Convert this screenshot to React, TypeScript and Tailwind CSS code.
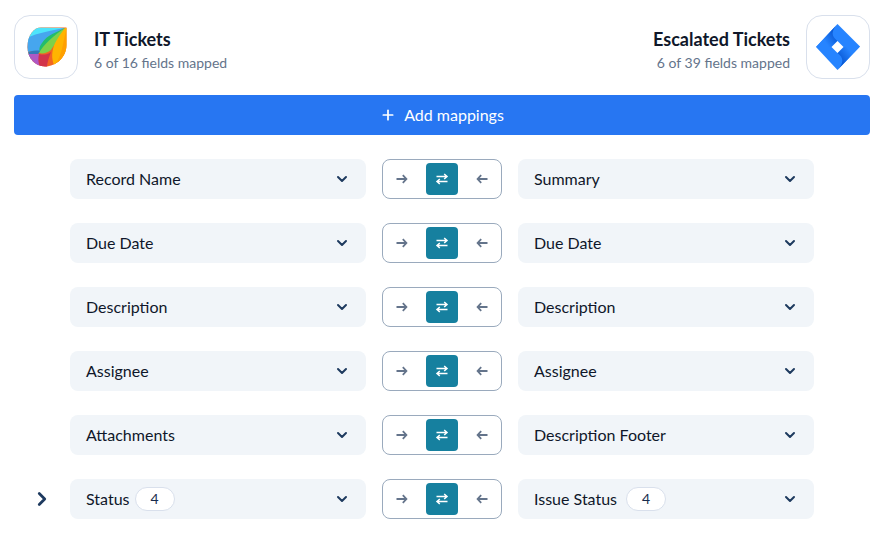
import { ChevronDown, ChevronRight, Plus } from "lucide-react";

interface Mapping {
  left: string;
  right: string;
  count?: number;
}

const mappings: Mapping[] = [
  { left: "Record Name", right: "Summary" },
  { left: "Due Date", right: "Due Date" },
  { left: "Description", right: "Description" },
  { left: "Assignee", right: "Assignee" },
  { left: "Attachments", right: "Description Footer" },
  { left: "Status", right: "Issue Status", count: 4 },
];

function LeafLogo() {
  return (
    <svg width="40" height="40" viewBox="0 0 40 40">
      <defs>
        <clipPath id="leaf">
          <path d="M14 0.5 H39.5 V18 C39.5 30 29 39.5 18 39.5 C8 39.5 0.5 31 0.5 20 C0.5 8 7 0.5 14 0.5 Z" />
        </clipPath>
      </defs>
      <g clipPath="url(#leaf)">
        <rect width="40" height="40" fill="#f26522" />
        <path d="M38 1 L0 0 V16 C12 8 26 4 38 1 Z" fill="#4ee4fb" />
        <path d="M38 1 C26 3 10 6 0 11 V25 C6 24 12 24 14 24 C18 14 28 6 38 1 Z" fill="#46a6ee" />
        <path d="M14 24 C8 23 3 24 0 26 V34 L8 30 C10 28 12 26 14 24 Z" fill="#3379b8" />
        <path d="M13 27 C8 27 3 27 0 27 V40 H16 C12 36 12 31 13 27 Z" fill="#ae59c4" />
        <path d="M38 1 C30 5 20 8 15 16 C12 20 12 23 13 25 C20 18 30 10 38 1 Z" fill="#22bd6c" />
        <path d="M38 1 C34 10 27 18 24 23 C20 26 16 27 12 26 C16 18 27 8 38 1 Z" fill="#7ed14a" />
        <path d="M12 27 C16 28 20 28 24 25 C22 30 20 36 20 40 H13 C11 36 11 31 12 27 Z" fill="#d2344a" />
        <path d="M38 1 C33 8 28 14 26 22 C24 30 26 36 28 40 H40 V1 Z" fill="#ffb400" />
        <path d="M39 4 V20 C39 28 34 34 28 37 C35 30 36 14 39 4 Z" fill="#ffa000" />
      </g>
    </svg>
  );
}

function DiamondLogo() {
  return (
    <svg width="44" height="46" viewBox="0 0 44 46" className="shrink-0">
      <defs>
        <linearGradient id="jiraA" x1="0.85" y1="0.4" x2="0.4" y2="0.75">
          <stop offset="0" stopColor="#0a5ad6" />
          <stop offset="1" stopColor="#2684ff" />
        </linearGradient>
        <linearGradient id="jiraB" x1="0.15" y1="0.6" x2="0.6" y2="0.25">
          <stop offset="0" stopColor="#0a5ad6" />
          <stop offset="1" stopColor="#2684ff" />
        </linearGradient>
      </defs>
      <path d="M21.5 0 L44 22.5 L21.5 46 L0 23 Z" fill="#2684ff" />
      <path d="M21.5 0 C15 7 15 12 21.5 17 L15.5 23 L0 23 Z" fill="url(#jiraA)" />
      <path d="M21.5 46 C28 39 28 34 21.5 29 L27.5 23 L44 22.5 Z" fill="url(#jiraB)" />
      <path d="M21.5 17 L27.5 23 L21.5 29 L15.5 23 Z" fill="#ffffff" />
    </svg>
  );
}

function SwapIcon() {
  return (
    <svg width="14" height="14" viewBox="0 0 14 14" fill="none" stroke="#ffffff" strokeWidth="1.5">
      <path d="M1.5 4.5 H12 M9.2 2 L12 4.5 L9.2 7" />
      <path d="M12.5 9.5 H2 M4.8 7 L2 9.5 L4.8 12" />
    </svg>
  );
}

function ArrowGlyph({ flip }: { flip?: boolean }) {
  return (
    <svg
      width="12"
      height="10"
      viewBox="0 0 12 10"
      fill="none"
      stroke="#64748b"
      strokeWidth="1.8"
      className={flip ? "rotate-180" : ""}
    >
      <path d="M0.5 5 H10 M6.8 1.2 L10.4 5 L6.8 8.8" />
    </svg>
  );
}

function CountPill({ count }: { count: number }) {
  return (
    <span className="ml-[5px] flex h-6 w-10 items-center justify-center rounded-full border border-[#d9e0ec] bg-white text-sm text-[#172b4d]">
      {count}
    </span>
  );
}

function FieldSelect({ label, count, pillGap }: { label: string; count?: number; pillGap?: boolean }) {
  return (
    <div className="flex h-10 w-[296px] items-center justify-between rounded-lg bg-[#f1f5f9] pl-4 pr-4">
      <div className="flex items-center">
        <span className="text-base text-[#0f172a]">{label}</span>
        {count !== undefined && (
          <div className={pillGap ? "ml-[4px]" : ""}>
            <CountPill count={count} />
          </div>
        )}
      </div>
      <ChevronDown size={16} strokeWidth={3} className="text-[#1e3a5f]" />
    </div>
  );
}

function DirectionToggle() {
  return (
    <div className="mx-4 flex h-10 w-[120px] items-center justify-between rounded-lg border border-[#9aaabd] bg-white pl-[13px] pr-[13px]">
      <ArrowGlyph />
      <div className="flex h-8 w-8 items-center justify-center rounded bg-[#16809f]">
        <SwapIcon />
      </div>
      <ArrowGlyph flip />
    </div>
  );
}

export default function App() {
  return (
    <div className="h-[540px] w-[881px] overflow-hidden bg-white pl-[14px] pr-[11px] pt-[15px] font-['Lato',sans-serif]">
      <div className="flex items-center justify-between">
        <div className="flex items-center">
          <div className="flex h-16 w-16 items-center justify-center rounded-2xl border border-[#d9e0ec] pl-px">
            <LeafLogo />
          </div>
          <div className="ml-4 pt-[6px]">
            <div className="text-lg font-bold leading-[24px] text-[#0f172a]">IT Tickets</div>
            <div className="mt-[2px] text-sm leading-5 text-[#64748b]">6 of 16 fields mapped</div>
          </div>
        </div>
        <div className="flex items-center">
          <div className="mr-4 pt-[6px] text-right">
            <div className="text-lg font-bold leading-[24px] text-[#0f172a]">Escalated Tickets</div>
            <div className="mt-[2px] text-sm leading-5 text-[#64748b]">6 of 39 fields mapped</div>
          </div>
          <div className="flex h-16 w-16 items-center justify-center rounded-2xl border border-[#d9e0ec]">
            <DiamondLogo />
          </div>
        </div>
      </div>

      <button className="mt-4 flex h-10 w-full items-center justify-center rounded bg-[#2776f2] text-base text-white">
        <Plus size={16} strokeWidth={2.6} className="mr-2" />
        Add mappings
      </button>

      <div className="mt-6 flex flex-col gap-6 pl-[56px]">
        {mappings.map((row) => (
          <div key={row.left} className="relative flex items-center">
            {row.count !== undefined && (
              <ChevronRight
                size={22}
                strokeWidth={3}
                className="absolute left-[-39px] top-[9px] text-[#1e3a5f]"
              />
            )}
            <FieldSelect label={row.left} count={row.count} />
            <DirectionToggle />
            <FieldSelect label={row.right} count={row.count} pillGap />
          </div>
        ))}
      </div>
    </div>
  );
}
